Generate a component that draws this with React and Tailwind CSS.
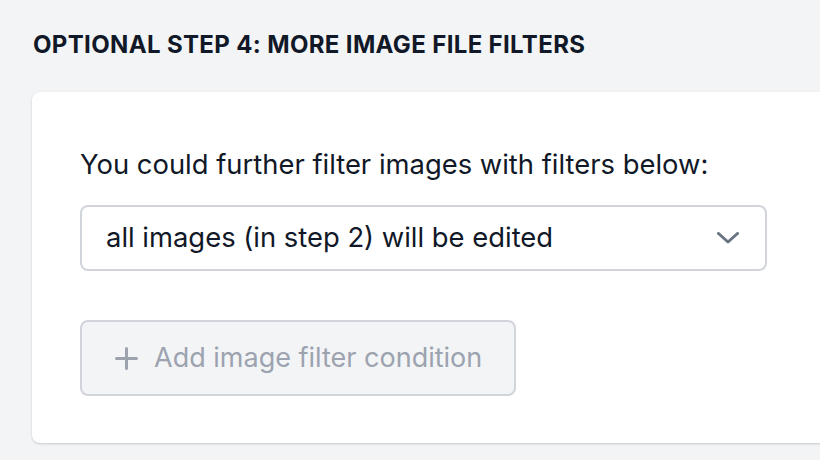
export default function App() {
  return (
    <div
      className="w-[820px] h-[460px] overflow-hidden bg-[#f3f4f6] pl-8 pt-[28px]"
      style={{ fontFamily: "Inter, 'Noto Sans', sans-serif" }}
    >
      {/* Section title */}
      <h2 className="text-[24px] font-bold uppercase text-[#111827] leading-[34px] pl-px tracking-[0.35px]">
        Optional Step 4: More image file filters
      </h2>

      {/* Card */}
      <div className="mt-[30px] w-[820px] h-[351px] bg-white rounded-l-lg shadow-[0_1px_3px_rgba(0,0,0,0.12),0_1px_2px_rgba(0,0,0,0.06)] pl-12 pt-[54px]">
        <p className="text-[27.4px] text-[#111827] leading-[36px]">
          You could further filter images with filters below:
        </p>

        <div className="mt-[23px] w-[687px] h-[66px] border-2 border-[#d1d5db] rounded-lg flex items-center justify-between pl-6 pr-[26px]">
          <span className="text-[27.4px] text-[#111827]">
            all images (in step 2) will be edited
          </span>
          <svg width="22" height="12" viewBox="0 0 22 12" className="text-[#6b7280]">
            <polyline
              points="1.5,1.5 11,10 20.5,1.5"
              fill="none"
              stroke="currentColor"
              strokeWidth="3"
              strokeLinecap="round"
              strokeLinejoin="round"
            />
          </svg>
        </div>

        <button className="mt-[49px] w-[436px] h-[76px] border-2 border-[#d1d5db] rounded-lg bg-[#f3f4f6] flex items-center pl-[33px] gap-4 text-[#9ca3af]">
          <svg width="23" height="23" viewBox="0 0 23 23">
            <path
              d="M11.5 1.5v20M1.5 11.5h20"
              fill="none"
              stroke="currentColor"
              strokeWidth="3"
              strokeLinecap="round"
            />
          </svg>
          <span className="text-[27px]">Add image filter condition</span>
        </button>
      </div>
    </div>
  );
}
